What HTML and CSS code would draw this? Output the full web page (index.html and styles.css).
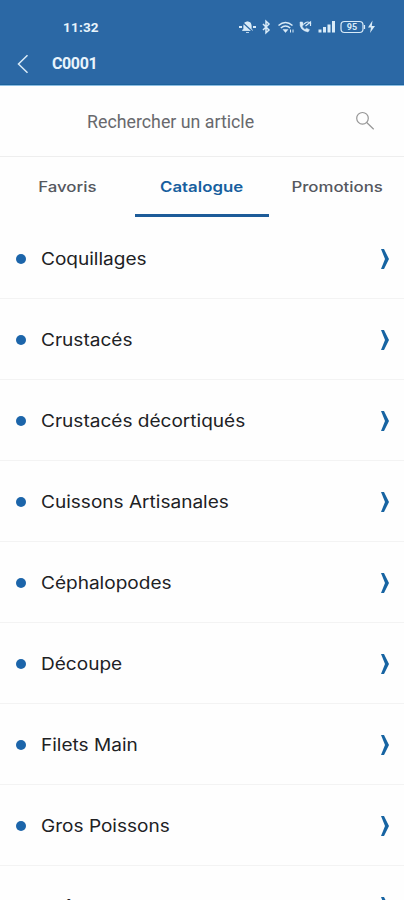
FILE: index.html
```
<!DOCTYPE html>
<html lang="fr">
<head>
<meta charset="utf-8">
<title>Catalogue</title>
<link rel="stylesheet" href="styles.css">
</head>
<body>
<header class="header">
  <div class="status">
    <span class="time">11:32</span>
    <svg class="indicators" width="140" height="16" viewBox="0 0 140 16" fill="none" stroke="#d9ebf8" stroke-width="1.5">
      <path d="M4.500 11.500h10l-1.300-2V6.500a3.700 3.700 0 0 0-7.400 0v3zM8 13.500h3" fill="#d9ebf8" stroke-width=".8"/>
      <path d="M1 8h3M15 8h3" stroke-width="2"/><path d="M3 2l12 11" stroke="#2b68a5" stroke-width="1.200"/>
      <path d="M25 5l6 6-3 2.800V2.200l3 2.800-6 6" stroke-width="1.500"/>
      <path d="M40.500 6.500q7-6 14 0M42.800 9q4.700-4 9.400 0"/><path d="M45 10.500h5L47.500 13.500z" fill="#d9ebf8" stroke-width=".5"/><path d="M52.500 10.500v3M55 10.500v3" stroke-width="1"/>
      <path d="M62 3q-1 8 8 10l1.500-2.300-3-1.500-1.500 1.300Q64.500 9 64 7l1.500-1L64.500 3z" fill="#d9ebf8" stroke-width=".5"/>
      <path d="M66 5q4-4 7 0M67.500 7l5-4v4" stroke-width="1.200"/>
      <g fill="#d9ebf8" stroke="none"><rect x="80.500" y="10.500" width="3" height="3"/><rect x="85" y="8" width="3" height="5.500"/><rect x="89.500" y="5.500" width="3" height="8"/><rect x="94" y="2" width="3" height="11.500"/></g>
      <rect x="103" y="2.500" width="22" height="11" rx="3.500" stroke-width="1.200"/><path d="M126.500 6v4" stroke-width="1.200"/>
      <text x="114" y="11.200" class="battery">95</text>
      <path d="M134.500 1.500l-4.500 7h3l-1 5.500 5-7h-3.200z" fill="#d9ebf8" stroke="none"/>
    </svg>
  </div>
  <div class="titlebar">
    <svg width="12" height="20" viewBox="0 0 12 20" fill="none" stroke="#d9ebf8" stroke-width="1.500"><path d="M10.500 1.300L1.500 10l9 8.700"/></svg>
    <h1 class="title">C0001</h1>
  </div>
</header>
<div class="search">
  <span class="placeholder">Rechercher un article</span>
  <svg width="20" height="20" viewBox="0 0 20 20" fill="none" stroke="#969696" stroke-width="1.200"><circle cx="7.500" cy="7.300" r="5.800"/><path d="M11.700 11.500l7 6.800"/></svg>
</div>
<nav class="tabs">
  <span class="tab"><span class="label">Favoris</span></span>
  <span class="tab active"><span class="label">Catalogue</span></span>
  <span class="tab"><span class="label">Promotions</span></span>
</nav>
<ul class="list">
  <li class="row"><i class="dot"></i><span class="name">Coquillages</span><svg class="chevron" viewBox="0 0 10 22"><path d="M1 1h3l5 10-5 10H1l4-10z"/></svg></li>
  <li class="row"><i class="dot"></i><span class="name">Crustacés</span><svg class="chevron" viewBox="0 0 10 22"><path d="M1 1h3l5 10-5 10H1l4-10z"/></svg></li>
  <li class="row"><i class="dot"></i><span class="name">Crustacés décortiqués</span><svg class="chevron" viewBox="0 0 10 22"><path d="M1 1h3l5 10-5 10H1l4-10z"/></svg></li>
  <li class="row"><i class="dot"></i><span class="name">Cuissons Artisanales</span><svg class="chevron" viewBox="0 0 10 22"><path d="M1 1h3l5 10-5 10H1l4-10z"/></svg></li>
  <li class="row"><i class="dot"></i><span class="name">Céphalopodes</span><svg class="chevron" viewBox="0 0 10 22"><path d="M1 1h3l5 10-5 10H1l4-10z"/></svg></li>
  <li class="row"><i class="dot"></i><span class="name">Découpe</span><svg class="chevron" viewBox="0 0 10 22"><path d="M1 1h3l5 10-5 10H1l4-10z"/></svg></li>
  <li class="row"><i class="dot"></i><span class="name">Filets Main</span><svg class="chevron" viewBox="0 0 10 22"><path d="M1 1h3l5 10-5 10H1l4-10z"/></svg></li>
  <li class="row"><i class="dot"></i><span class="name">Gros Poissons</span><svg class="chevron" viewBox="0 0 10 22"><path d="M1 1h3l5 10-5 10H1l4-10z"/></svg></li>
  <li class="row"><i class="dot"></i><span class="name">Huîtres</span><svg class="chevron" viewBox="0 0 10 22"><path d="M1 1h3l5 10-5 10H1l4-10z"/></svg></li>
</ul>
</body>
</html>
```
FILE: styles.css
```
* { box-sizing: border-box; }
html { height: 900px; overflow: hidden; }
body { margin: 0; height: 900px; overflow: hidden; background: #fefefe; font-family: Inter, sans-serif; color: #202124; }
.header { height: 86px; background: #2b68a5; border-bottom: 1px solid #8cbde2; color: #e8f4fc; box-shadow: inset 0 -1px #1d629c; }
.status { height: 43px; padding: 10px 26px 0 63px; display: flex; align-items: center; justify-content: space-between; }
.time { font: 700 13.500px Roboto, sans-serif; letter-spacing: .2px; }
.indicators { display: block; }
.battery { font: 700 9px Roboto, sans-serif; fill: #d9ebf8; stroke: none; text-anchor: middle; }
.titlebar { height: 41px; padding-left: 17px; display: flex; align-items: center; gap: 23px; }
.title { margin: 0; font: 700 16px Roboto, sans-serif; letter-spacing: -.4px; }
.search { height: 71px; border-bottom: 1px solid #eee; padding: 0 29px 0 87px; display: flex; align-items: center; justify-content: space-between; }
.placeholder { font: 400 17.800px Roboto, sans-serif; color: #68696d; }
.tabs { height: 60px; display: grid; grid-template-columns: repeat(3, 1fr); font-size: 14px; font-weight: 500; color: #55585e; }
.tab { display: flex; justify-content: center; align-items: center; padding-top: 2px; border-bottom: 3px solid transparent; white-space: nowrap; }
.label { transform: scaleX(1.2); }
.active { border-color: #1d5c99; color: #175f9e; font-weight: 600; }
.list { list-style: none; margin: 0; padding: 0; height: 683px; overflow: hidden; }
.row { height: 81px; padding: 2px 14px 0 16px; border-bottom: 1px solid #f3f3f3; display: flex; align-items: center; }
.row:first-child { height: 82px; }
.dot { width: 10px; height: 10px; border-radius: 50%; background: #1c65aa; margin-right: 15px; }
.name { font-size: 17px; transform: scaleX(1.12); transform-origin: left; }
.chevron { width: 10px; height: 22px; margin-left: auto; fill: #1764a2; }
```
